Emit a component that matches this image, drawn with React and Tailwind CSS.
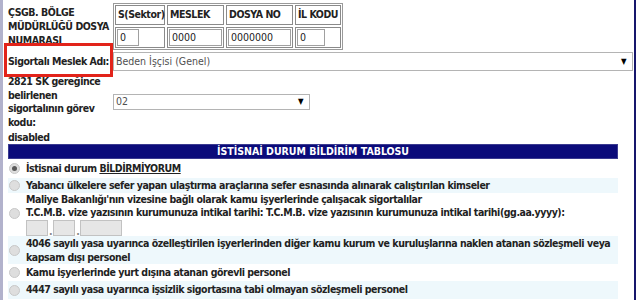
import React from "react";

function Radio({ checked }) {
  return (
    <div className="w-[11px] h-[11px] shrink-0 rounded-full border border-[#c8c8c8] bg-[#dedede] flex items-center justify-center">
      {checked && <div className="w-[5px] h-[5px] rounded-full bg-[#5a5a5a]" />}
    </div>
  );
}

function Select({ text, className }) {
  return (
    <div className={"border border-[#b4b4b4] bg-white flex items-center justify-between pl-[2px] pr-[6px] " + className}>
      <span className="font-normal text-[#505050] tracking-normal">{text}</span>
      <span className="text-[8px] text-black">▼</span>
    </div>
  );
}

export default function App() {
  const headers = [
    { t: "S(Sektor)", w: "w-[50px]" },
    { t: "MESLEK", w: "w-[57px]" },
    { t: "DOSYA NO", w: "w-[67px]" },
    { t: "İL KODU", w: "w-[46px]" },
  ];
  const inputs = [
    { v: "0", w: "w-[22px]", cw: "w-[50px]" },
    { v: "0000", w: "w-full", cw: "w-[57px]" },
    { v: "0000000", w: "w-full", cw: "w-[67px]" },
    { v: "0", w: "w-[28px]", cw: "w-[46px]" },
  ];
  return (
    <div className="relative w-[640px] h-[300px] overflow-hidden bg-white font-['DejaVu_Sans_Condensed',sans-serif] font-bold text-[10.5px] tracking-[-0.45px] text-[#222]">
      <div className="w-[636px] h-full border-l-[3px] border-l-[#b2b2cc] border-r-[2px] border-r-[#16166c] pl-[5px]">
        {/* Row A */}
        <div className="flex pt-[3px]">
          <div className="w-[105px] pt-[2px] leading-[14px]">ÇSGB. BÖLGE MÜDÜRLÜĞÜ DOSYA NUMARASI</div>
          <div className="border border-[#9a9a9a] p-px flex flex-col gap-[2px]">
            <div className="flex gap-[2px]">
              {headers.map((h) => (
                <div key={h.t} className={h.w + " h-[20px] border border-[#8a8a8a] flex items-center pl-[2px] whitespace-nowrap"}>
                  {h.t}
                </div>
              ))}
            </div>
            <div className="flex gap-[2px]">
              {inputs.map((c, i) => (
                <div key={i} className={c.cw + " h-[21px] border border-[#8a8a8a] p-px"}>
                  <div className={c.w + " h-full border border-[#a0a0a0] bg-white flex items-center pl-[2px] font-normal tracking-normal text-[#222]"}>
                    {c.v}
                  </div>
                </div>
              ))}
            </div>
          </div>
        </div>
        {/* Row B */}
        <div className="flex items-center mt-[2px] h-[19px]">
          <div className="w-[105px] whitespace-nowrap">Sigortalı Meslek Adı:</div>
          <Select text="Beden İşçisi (Genel)" className="w-[520px] h-[19px]" />
        </div>
        {/* Row C */}
        <div className="flex items-center mt-[4px]">
          <div className="w-[105px] leading-[13.5px]">2821 SK gereğince belirlenen sigortalının görev kodu:</div>
          <Select text="02" className="w-[197px] h-[16px]" />
        </div>
        <div className="leading-[13px] mt-[2px]">disabled</div>
        {/* Bar */}
        <div className="w-[610px] h-[15px] bg-[#0b0b7a] border border-[#3a3a90] text-white flex items-center justify-center leading-none tracking-normal">
          İSTİSNAİ DURUM BİLDİRİM TABLOSU
        </div>
        <div className="w-[610px]">
          <div className="h-[19px] flex items-center pl-[1px] gap-[6px]">
            <Radio checked />
            <span>
              İstisnai durum <span className="underline">BİLDİRMİYORUM</span>
            </span>
          </div>
          <div className="h-[15px] flex items-center pl-[1px] gap-[6px] bg-[#eef8fc]">
            <Radio />
            <span className="whitespace-nowrap">Yabancı ülkelere sefer yapan ulaştırma araçlarına sefer esnasında alınarak calıştırılan kimseler</span>
          </div>
          <div className="h-[43px] flex pl-[1px] gap-[6px]">
            <div className="pt-[15px]">
              <Radio />
            </div>
            <div className="leading-[13px]">
              <div className="whitespace-nowrap">Maliye Bakanlığı'nın vizesine bağlı olarak kamu işyerlerinde çalışacak sigortalılar</div>
              <div className="whitespace-nowrap">T.C.M.B. vize yazısının kurumunuza intikal tarihi: T.C.M.B. vize yazısının kurumunuza intikal tarihi(gg.aa.yyyy):</div>
              <div className="flex items-end gap-[1px] mt-[1px]">
                <div className="w-[22px] h-[16px] bg-[#e6e6e6] border border-[#c2c2c2]" />
                <span className="leading-[10px] text-[#888]">.</span>
                <div className="w-[22px] h-[16px] bg-[#e6e6e6] border border-[#c2c2c2]" />
                <span className="leading-[10px] text-[#888]">.</span>
                <div className="w-[42px] h-[16px] bg-[#e6e6e6] border border-[#c2c2c2]" />
              </div>
            </div>
          </div>
          <div className="h-[28px] flex items-center pl-[1px] gap-[6px] bg-[#eef8fc] leading-[14px]">
            <Radio />
            <span className="pr-[4px]">4046 sayılı yasa uyarınca özelleştirilen işyerlerinden diğer kamu kurum ve kuruluşlarına naklen atanan sözleşmeli veya kapsam dışı personel</span>
          </div>
          <div className="h-[17px] flex items-center pl-[1px] gap-[6px]">
            <Radio />
            <span className="whitespace-nowrap">Kamu işyerlerinde yurt dışına atanan görevli personel</span>
          </div>
          <div className="h-[18px] flex items-center pl-[1px] gap-[6px] bg-[#eef8fc]">
            <Radio />
            <span className="whitespace-nowrap">4447 sayılı yasa uyarınca işsizlik sigortasına tabi olmayan sözleşmeli personel</span>
          </div>
        </div>
      </div>
      <div className="absolute left-[4px] top-[43px] w-[109px] h-[34px] border-[3px] border-[#e2231a]" />
    </div>
  );
}
